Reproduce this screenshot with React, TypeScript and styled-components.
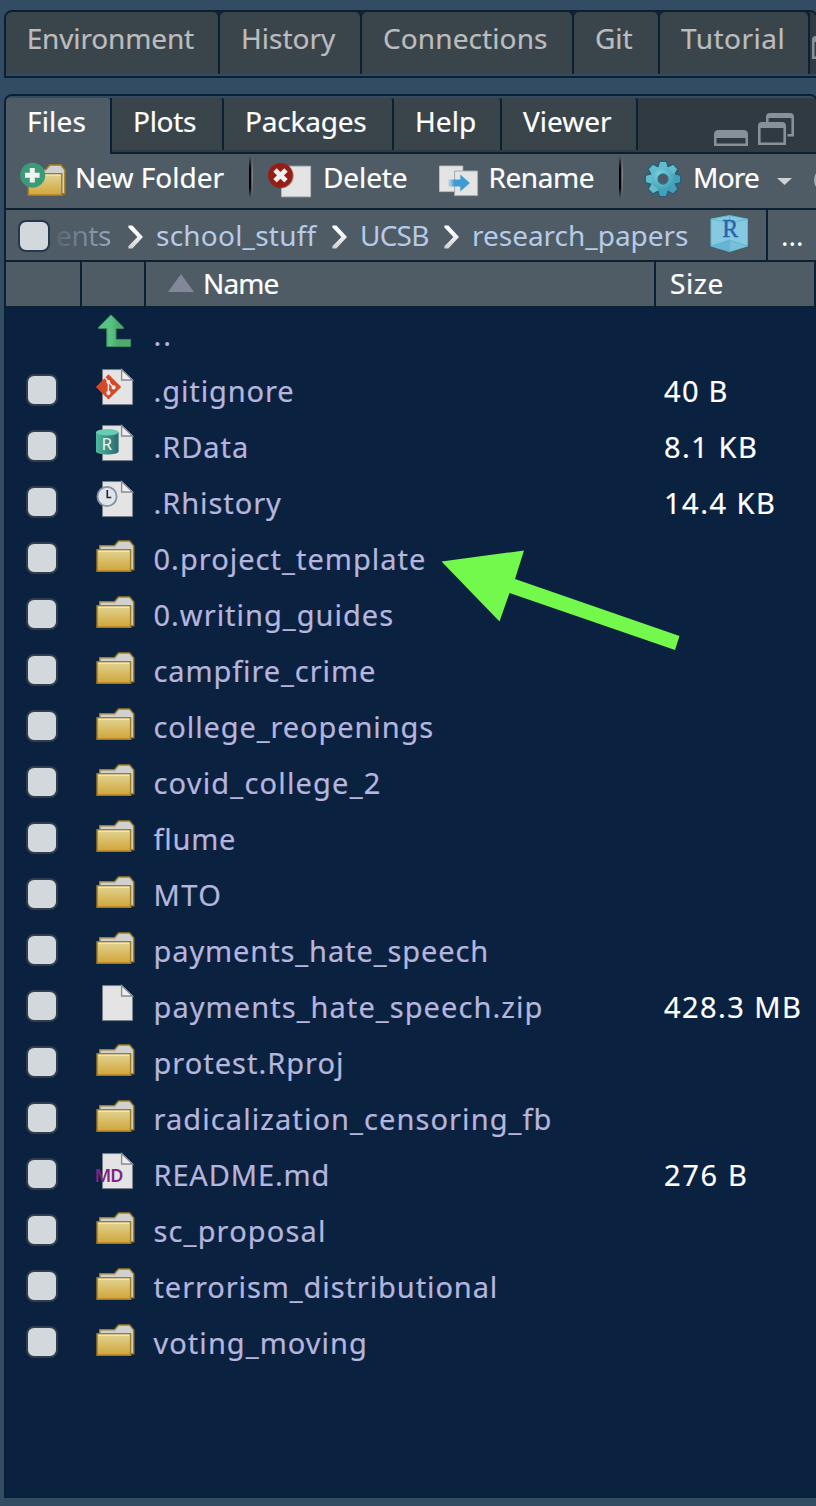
import React from "react";
import styled, { createGlobalStyle } from "styled-components";

const line = "#0c2034";
const frame = "#324c63";
const bar = "#4f5c66";
const tabDark = "#3a444b";
const strip = "#303a42";
const table = "#0b2140";

const GlobalStyle = createGlobalStyle`
  html, body { margin: 0; background: ${frame}; overflow: hidden; }
  * { box-sizing: border-box; }
  body { font-family: "Noto Sans", sans-serif; font-size: 28px; color: #fff; }
`;

const Page = styled.div`
  width: 816px;
  height: 1506px;
  padding: 10px 0 8px 4px;
  display: flex;
  flex-direction: column;
  gap: 16px;
  overflow: hidden;
`;

const Pane = styled.section<{ $height: number }>`
  width: 814px;
  height: ${(p) => p.$height}px;
  flex: none;
  display: flex;
  flex-direction: column;
  border: 2px solid ${line};
  border-radius: 8px 8px 0 0;
  overflow: hidden;
`;

const UpperTabs = styled.div`
  height: 62px;
  display: flex;
  background: ${strip};
`;

const Label = styled.span<{ $track?: number }>`
  letter-spacing: ${(p) => p.$track ?? 0}px;
  white-space: pre;
  -webkit-text-stroke: 0.2px currentColor;
`;

const UpperTab = styled.div<{ $width: number; $pad: number }>`
  width: ${(p) => p.$width}px;
  padding-left: ${(p) => p.$pad}px;
  flex: none;
  line-height: 52px;
  color: #bcbcbd;
  background: ${tabDark};
  border-right: 2px solid ${line};
  border-radius: 5px 6px 0 0;
  box-shadow: 0 -3px 0 ${line};
`;

const UpperCorner = styled.div`
  flex: 1;
  padding: 15px 0 0 2px;
`;

const LowerTabs = styled.div`
  height: 58px;
  flex: none;
  display: flex;
  background: ${strip};
  border-top: 2px solid ${frame};
`;

const LowerTab = styled.div<{ $width: number; $active?: boolean }>`
  width: ${(p) => p.$width}px;
  height: ${(p) => (p.$active ? 56 : 52)}px;
  padding-left: 21px;
  flex: none;
  line-height: 46px;
  background: ${(p) => (p.$active ? bar : tabDark)};
  border-right: ${(p) => (p.$active ? "none" : `2px solid ${line}`)};
  border-radius: 0 3px 0 0;
`;

const LowerTabGroup = styled.div`
  flex: 1;
  display: flex;
  border-left: 2px solid ${line};
  border-bottom: 2px solid ${line};
`;

const WindowButtons = styled.div`
  display: flex;
  padding: 15px 0 0 76px;
  gap: 10px;
  align-items: flex-start;
`;

const Toolbar = styled.div`
  height: 54px;
  flex: none;
  display: flex;
  background: ${bar};
`;

const ToolButton = styled.div<{ $left: number; $width: number; $gap: number }>`
  display: flex;
  flex: none;
  width: ${(p) => p.$width}px;
  padding-left: ${(p) => p.$left}px;
  gap: ${(p) => p.$gap}px;
  line-height: 46px;
`;

const Divider = styled.div`
  width: 6px;
  height: 42px;
  flex: none;
  margin-top: 2px;
  background:
    linear-gradient(transparent, #000 30%, #000 75%, transparent) 1px 0 / 2px 100% no-repeat,
    linear-gradient(transparent, #85898e 45%, transparent) 4px 0 / 1px 100% no-repeat;
`;

const RefreshEdge = styled.div`
  width: 24px;
  height: 24px;
  flex: none;
  margin-top: 14px;
  border: 4px solid #a9adb1;
  border-radius: 50%;
`;

const PathBar = styled.div`
  height: 54px;
  flex: none;
  display: flex;
  align-items: stretch;
  background: ${bar};
  border: solid ${line};
  border-width: 2px 0;
`;

const PathItem = styled.span<{ $width: number; $track: number }>`
  width: ${(p) => p.$width}px;
  margin-left: 12px;
  flex: none;
  line-height: 51px;
  color: #b6cbe9;
  letter-spacing: ${(p) => p.$track}px;
  white-space: nowrap;
`;

const FadedItem = styled(PathItem)`
  margin-left: 6px;
  color: transparent;
  background: linear-gradient(90deg, rgba(182, 203, 233, 0.1), rgba(182, 203, 233, 0.72) 80%);
  -webkit-background-clip: text;
  background-clip: text;
`;

const CheckBox = styled.span`
  display: block;
  width: 32px;
  height: 32px;
  flex: none;
  background: #d3d8dc;
  border: 2px solid #303e4c;
  border-radius: 8px;
`;

const PathCheck = styled(CheckBox)`
  margin: 10px 0 0 12px;
  border-color: #24384e;
`;

const MoreCell = styled.div`
  flex: 1;
  margin-left: 17px;
  padding-left: 13px;
  border-left: 2px solid ${line};
  line-height: 50px;
`;

const HeaderRow = styled.div`
  height: 46px;
  width: 810px;
  flex: none;
  display: flex;
  background: ${bar};
  border-bottom: 2px solid ${line};
`;

const HeaderCell = styled.div<{ $width: number; $pad?: number }>`
  width: ${(p) => p.$width}px;
  padding-left: ${(p) => p.$pad ?? 0}px;
  flex: none;
  display: flex;
  gap: 9px;
  line-height: 43px;
  border-right: 2px solid ${line};
`;

const Listing = styled.div`
  flex: 1;
  position: relative;
  background: ${table};
  font-size: 29px;
`;

const Row = styled.div`
  height: 56px;
  display: grid;
  grid-template-columns: 90px 57.5px 510.5px 1fr;
  line-height: 54px;
`;

const CheckCell = styled.div`
  padding: 10px 0 0 20px;
`;

const IconCell = styled.div`
  padding-top: 4px;
  line-height: 0;
`;

const FileName = styled(Label)`
  color: #b5b5dd;
`;

const Pointer = styled.svg`
  position: absolute;
  left: 434px;
  top: 240px;
`;

const Svg = styled.svg<{ $top?: number; $left?: number }>`
  display: block;
  flex: none;
  overflow: visible;
  margin: ${(p) => p.$top ?? 0}px 0 0 ${(p) => p.$left ?? 0}px;
`;

const Defs = () => (
  <Svg width="0" height="0">
    <defs>
      <linearGradient id="fold" x1="0" y1="0" x2="0" y2="1">
        <stop offset="0" stopColor="#e0d592" />
        <stop offset="1" stopColor="#d2a43a" />
      </linearGradient>
      <linearGradient id="cyl" x1="0" y1="0" x2="1" y2="0">
        <stop offset="0" stopColor="#4db89c" />
        <stop offset="1" stopColor="#2b6a70" />
      </linearGradient>
      <radialGradient id="gear" cx="0.4" cy="0.35" r="0.65">
        <stop offset="0" stopColor="#7fd3df" />
        <stop offset="1" stopColor="#3a9bb4" />
      </radialGradient>
      <linearGradient id="move" x1="0" y1="0" x2="1" y2="0">
        <stop offset="0" stopColor="#3f9bd3" stopOpacity="0.1" />
        <stop offset="0.3" stopColor="#3f9bd3" />
      </linearGradient>
      <linearGradient id="upg" x1="0" y1="0" x2="1" y2="0">
        <stop offset="0.4" stopColor="#56c283" />
        <stop offset="0.6" stopColor="#4eab6b" />
      </linearGradient>
      <linearGradient id="chev" x1="0" y1="0" x2="0" y2="1">
        <stop offset="0.3" stopColor="#fff" />
        <stop offset="1" stopColor="#cfcfd0" />
      </linearGradient>
    </defs>
  </Svg>
);

const FolderShape = () => (
  <>
    <path d="M3.8 29V5.7h14.7L22.6 0.9h10.9l4.2 5.200v23.700h-4z" fill="#d0d0d0" stroke="#a37e1d" strokeWidth="1.5" />
    <path d="M1 9.7h33.600v21.5H1z" fill="url(#fold)" stroke="#a37a1b" strokeWidth="1.4" />
    <path d="M2.200 11.200h31.200" stroke="#eee9cd" strokeWidth="1.300" />
  </>
);

const Folder = () => (
  <Svg width="40" height="34" $top={4}><FolderShape /></Svg>
);

const Doc = ({ children }: { children?: React.ReactNode }) => (
  <Svg width="40" height="38" $top={1}>
    <path d="M6.500 0.600H26L36.600 11v24.600H6.500z" fill="#e4e4e4" stroke="#777f88" strokeWidth="0.900" />
    <path d="M25.600 0.600V11h11z" fill="#eee" stroke="#878b90" strokeWidth="1.300" />
    {children}
  </Svg>
);

const UpArrow = () => (
  <Svg width="40" height="36" $top={2} $left={2}>
    <path d="M13 0.800L25.400 13.200v1.400H18v10.800h14.600v7.200H8.800v-18H.6v-1.400z" fill="url(#upg)" stroke="#3f8a62" strokeWidth="1" />
  </Svg>
);

const GitDoc = () => (
  <Doc>
    <path d="M12.500 5.300l12.700 12.600L12.500 30.500-.1 17.900z" fill="#d5492b" />
    <g stroke="#e9e6e6" strokeWidth="1.500" fill="#e9e6e6">
      <path d="M9 8.500l3.400 4.600v11.500M13 13.500l5 5.300" fill="none" />
      <circle cx="12.400" cy="13" r="1.200" /><circle cx="12.400" cy="24" r="1.400" /><circle cx="17.600" cy="18.400" r="1.400" />
    </g>
  </Doc>
);

const DataDoc = () => (
  <Doc>
    <path d="M0 7v19.500c0 4 22.600 4 22.600 0V7z" fill="url(#cyl)" />
    <ellipse cx="11.300" cy="7.300" rx="11.300" ry="3.200" fill="#68cbb5" />
    <text x="5.600" y="25.300" fontSize="17" fill="#e8f3f1" fontFamily="Noto Sans">R</text>
  </Doc>
);

const HistoryDoc = () => (
  <Doc>
    <circle cx="11" cy="15.500" r="9.600" fill="#dfe3ea" stroke="#8390a2" strokeWidth="1.800" />
    <path d="M11.300 9v7.500h4" fill="none" stroke="#23262b" strokeWidth="1.600" />
  </Doc>
);

const MdDoc = () => (
  <Doc>
    <text x="-1.500" y="28.700" fontSize="18" letterSpacing="-1" fontWeight="600" fill="#802682" fontFamily="Noto Sans">MD</text>
  </Doc>
);

const NewFolderIcon = () => (
  <Svg width="48" height="36" $top={10} $left={14}>
    <g transform="translate(7.2 0)"><FolderShape /></g>
    <circle cx="12.700" cy="11.200" r="12.500" fill="#3d9a78" />
    <path d="M12.300 4v14.600M5 11.300h14.600" stroke="#f1f1f1" strokeWidth="5" />
  </Svg>
);

const DeleteIcon = () => (
  <Svg width="46" height="36" $top={9}>
    <path d="M13.600 3.200h29v30.600h-29z" fill="#e4e4e4" stroke="#b5b9bd" strokeWidth="1" />
    <circle cx="13.200" cy="12.800" r="12.500" fill="#5a3032" opacity="0.500" />
    <circle cx="12.400" cy="12.200" r="12.300" fill="#981c16" />
    <path d="M7 7l11 10.800M18 7L7 17.800" stroke="#f1eeee" strokeWidth="4.800" />
  </Svg>
);

const RenameIcon = () => (
  <Svg width="40" height="36" $top={11}>
    <path d="M.5 1h23.300v25.600H.5z" fill="#e4e4e4" stroke="#c1c4c7" strokeWidth="0.800" />
    <path d="M15.600 6h23v24.600h-23z" fill="#e4e4e4" stroke="#a5abb0" strokeWidth="1" />
    <path d="M9 14.400h12.300V9.600l9.600 8.500-9.600 8.500v-5H9z" fill="url(#move)" />
  </Svg>
);

const teeth = [0, 45, 90, 135, 180, 225, 270, 315];
const GearIcon = () => (
  <Svg width="38" height="38" viewBox="-19 -19 38 38" $top={6}>
    <g stroke="#265f76" strokeWidth="1.600">
      {teeth.map((a) => (
        <path key={a} d="M-5.500 -11L-3.400 -17.600h6.800L5.500 -11z" transform={`rotate(${a})`} fill="#4aa9bf" />
      ))}
    </g>
    <circle r="12.900" fill="url(#gear)" />
    {teeth.map((a) => (
      <path key={a} d="M-4.600 -11L-2.900 -17h5.800L4.600 -11z" transform={`rotate(${a})`} fill={a > 45 && a < 225 ? "#469fb8" : "#62bccb"} />
    ))}
    <circle r="5" fill="#4d5a64" stroke="#2d7088" strokeWidth="1.300" />
  </Svg>
);

const Chevron = () => (
  <Svg width="16" height="24" $top={15}>
    <path d="M0.400 0.500h4L15 12 4.400 23.500H.4v-2.200L9.400 12 .4 2.600z" fill="url(#chev)" />
  </Svg>
);

const CubeIcon = () => (
  <Svg width="38" height="38" $top={5}>
    <path d="M18.500 .5L36.500 4v27l-18 5.500L0 31V4z" fill="#85cae0" stroke="#60b9c8" strokeWidth="1" />
    <path d="M18.500 25L0 31l18.500 5.500z" fill="#65b4d6" />
    <path d="M18.500 25l18 6-18 5.500z" fill="#76c0da" />
    <path d="M0 4l18.500 4 18-4M0 31l18.500-6 18 6M18.500 .5V6M18.500 25v11.500" fill="none" stroke="#5eb6c6" strokeWidth="0.900" />
    <text x="11.300" y="22" fontSize="25" textLength="16" lengthAdjust="spacingAndGlyphs" fill="#2b62ae" stroke="#2b62ae" strokeWidth="0.400" fontFamily="Liberation Serif">R</text>
  </Svg>
);

const MinimizeIcon = () => (
  <Svg width="34" height="17" $top={17}>
    <path fillRule="evenodd" d="M0 16V4.500Q0 0 4.500 0h25Q34 0 34 4.500V16zM2.500 8v5.500h29V8z" fill="#869298" />
  </Svg>
);

const RestoreIcon = () => (
  <Svg width="36" height="32">
    <path fillRule="evenodd" d="M0 32V13q0-4 4-4h20q4 0 4 4v19zM2.600 15v14.500h22.800V15z" fill="#869298" />
    <path d="M8 9V4q0-4 4-4h20q4 0 4 4v19.500h-6.500V21h3.900V5H10.600v4z" fill="#869298" />
  </Svg>
);

const upper: [string, number, number, number][] = [
  ["Environment", 214, 20.7, -0.15],
  ["History", 142, 21, 0],
  ["Connections", 212, 21, 0.1],
  ["Git", 86, 21, -0.05],
  ["Tutorial", 150, 21, 0.5],
];
const lower: [string, number, number][] = [
  ["Plots", 112, -0.3],
  ["Packages", 170, -0.2],
  ["Help", 108, 0.08],
  ["Viewer", 136, 0],
];

const files: [string, number, React.FC, string?, number?][] = [
  [".gitignore", 0.9, GitDoc, "40 B", 1.3],
  [".RData", 0.95, DataDoc, "8.1 KB", 1.5],
  [".Rhistory", 0.93, HistoryDoc, "14.4 KB", 1.5],
  ["0.project_template", 1.02, Folder],
  ["0.writing_guides", 1, Folder],
  ["campfire_crime", 0.9, Folder],
  ["college_reopenings", 0.9, Folder],
  ["covid_college_2", 1.18, Folder],
  ["flume", 0.75, Folder],
  ["MTO", 1.4, Folder],
  ["payments_hate_speech", 0.9, Folder],
  ["payments_hate_speech.zip", 1.06, Doc, "428.3 MB", 1.45],
  ["protest.Rproj", 1, Folder],
  ["radicalization_censoring_fb", 1.08, Folder],
  ["README.md", 0.85, MdDoc, "276 B", 1.7],
  ["sc_proposal", 1.15, Folder],
  ["terrorism_distributional", 0.9, Folder],
  ["voting_moving", 1.04, Folder],
];

export default function App() {
  return (
    <Page>
      <GlobalStyle />
      <Pane $height={68}>
        <Defs />
        <UpperTabs>
          {upper.map(([t, w, pad, k]) => (
            <UpperTab key={t} $width={w} $pad={pad}><Label $track={k}>{t}</Label></UpperTab>
          ))}
          <UpperCorner><RestoreIcon /></UpperCorner>
        </UpperTabs>
      </Pane>
      <Pane $height={1404}>
        <LowerTabs>
          <LowerTab $width={104} $active><Label $track={0.18}>Files</Label></LowerTab>
          <LowerTabGroup>
            {lower.map(([t, w, k]) => (
              <LowerTab key={t} $width={w}><Label $track={k}>{t}</Label></LowerTab>
            ))}
            <WindowButtons><MinimizeIcon /><RestoreIcon /></WindowButtons>
          </LowerTabGroup>
        </LowerTabs>
        <Toolbar>
          <ToolButton $left={0} $width={242} $gap={7}><NewFolderIcon /><Label $track={0}>New Folder</Label></ToolButton>
          <Divider />
          <ToolButton $left={14} $width={185} $gap={9}><DeleteIcon /><Label $track={-0.1}>Delete</Label></ToolButton>
          <ToolButton $left={0} $width={179} $gap={9.5}><RenameIcon /><Label $track={-0.45}>Rename</Label></ToolButton>
          <Divider />
          <ToolButton $left={20} $width={190} $gap={11}>
            <GearIcon />
            <Label $track={-0.75}>More</Label>
            <Svg width="15" height="8" $top={24} $left={7}><path d="M0 0h15L7.500 7z" fill="#cfd2d4" /></Svg>
          </ToolButton>
          <RefreshEdge />
        </Toolbar>
        <PathBar>
          <PathCheck />
          <FadedItem $width={72} $track={-0.4}>ents</FadedItem>
          <Chevron />
          <PathItem $width={176} $track={0.22}>school_stuff</PathItem>
          <Chevron />
          <PathItem $width={84} $track={-0.8}>UCSB</PathItem>
          <Chevron />
          <PathItem $width={239} $track={-0.02}>research_papers</PathItem>
          <CubeIcon />
          <MoreCell>...</MoreCell>
        </PathBar>
        <HeaderRow>
          <HeaderCell $width={76} />
          <HeaderCell $width={64} />
          <HeaderCell $width={510} $pad={22}>
            <Svg width="26" height="18" $top={12}><path d="M13 0l13 18H0z" fill="#808899" /></Svg>
            <Label $track={-0.9}>Name</Label>
          </HeaderCell>
          <HeaderCell $width={160} $pad={14}><Label $track={0.6}>Size</Label></HeaderCell>
        </HeaderRow>
        <Listing>
          <Row>
            <CheckCell />
            <IconCell><UpArrow /></IconCell>
            <FileName $track={2}>..</FileName>
          </Row>
          {files.map(([name, k, Icon, size, sk]) => (
            <Row key={name}>
              <CheckCell><CheckBox /></CheckCell>
              <IconCell><Icon /></IconCell>
              <FileName $track={k}>{name}</FileName>
              {size && <Label $track={sk}>{size}</Label>}
            </Row>
          ))}
          <Pointer width="250" height="106">
            <path d="M1.500 13.500L84 2.500 75 31 239.500 88l-4.500 14L69.500 45 59.500 73.500z" fill="#73f84c" />
          </Pointer>
        </Listing>
      </Pane>
    </Page>
  );
}
